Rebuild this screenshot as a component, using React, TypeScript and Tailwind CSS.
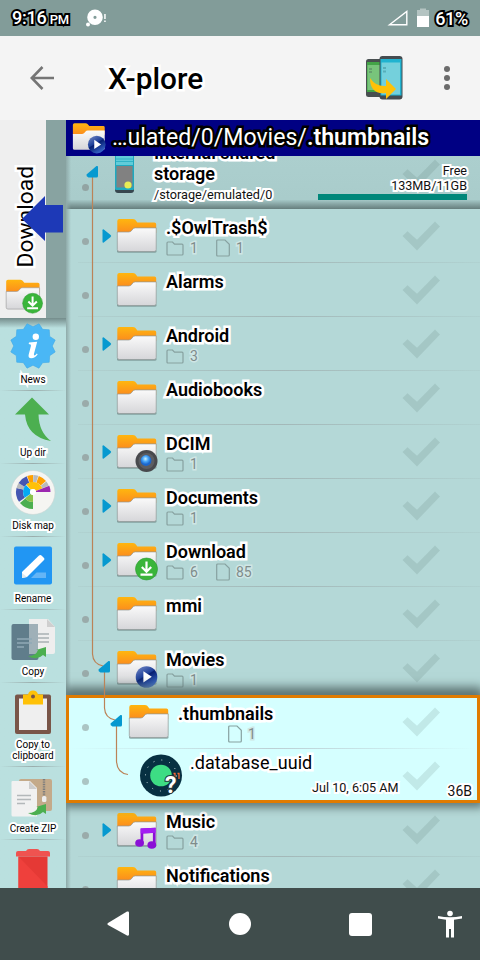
import React from "react";

const whiteHalo = "[-webkit-text-stroke:5px_#fff] [paint-order:stroke_fill] [stroke-linejoin:round]";
const blackHalo = "[-webkit-text-stroke:4px_#000] [paint-order:stroke_fill] [stroke-linejoin:round]";

type Badge = "play" | "camera" | "download" | "music";

function BadgeMark({ kind }: { kind: Badge }) {
  if (kind === "download")
    return (
      <g>
        <circle cx="31.5" cy="29" r="11" fill="#3ab53a" stroke="#2f9a35" strokeWidth=".6" />
        <path d="M31.5 21.5v9.5M26.8 27l4.7 4.7 4.7-4.7M25.5 34.6h12" fill="none" stroke="#fff" strokeWidth="2.2" />
      </g>
    );
  if (kind === "camera")
    return (
      <g>
        <circle cx="31.5" cy="29" r="11" fill="#48494d" />
        <circle cx="31.5" cy="29" r="8" fill="#5c5d62" />
        <circle cx="31" cy="28.5" r="5.4" fill="url(#lens)" />
      </g>
    );
  if (kind === "play")
    return (
      <g>
        <circle cx="31.5" cy="29" r="10.8" fill="url(#ball)" />
        <path d="M28.4 23.2v11.2l8.4-5.6z" fill="#fff" />
      </g>
    );
  return (
    <g fill="#8a0fd6">
      <path d="M25.6 18.5l15-.7v16.7h-2.7V23l-9.6.5V33h-2.7z" />
      <path d="M25.6 18.5l15-.7v5l-15 .7z" fill="#a31df2" />
      <ellipse cx="24.6" cy="33" rx="4.4" ry="3.8" />
      <ellipse cx="36.8" cy="35" rx="4.4" ry="3.8" />
    </g>
  );
}

function Folder({ badge, className = "" }: { badge?: Badge; className?: string }) {
  return (
    <svg viewBox="0 0 44 42" className={`h-[42px] w-[44px] shrink-0 ${className}`}>
      <path d="M2 34.5h39.5v1.6q-.4 .6-1.6 .6H3.6q-1.2 0-1.6-.8z" fill="#6f8988" opacity=".7" />
      <path d="M2.3 17V5q0-2 2-2h13.5q1.6 0 2.4 .8l2.2 2.6h17q1.8 0 1.8 1.8V17z" fill="url(#orange)" />
      <path d="M2.3 16h11.3q2 0 3.2-1.6l1-1.4q.8-1.1 2.6-1.1h20.8V33.5q0 2-2 2H4.3q-2 0-2-2z" fill="url(#paper)" stroke="#8f9897" strokeWidth=".7" />
      {badge && <BadgeMark kind={badge} />}
    </svg>
  );
}

function Check({ className = "" }: { className?: string }) {
  return (
    <svg viewBox="0 0 38 30" className={`h-[30px] w-[38px] shrink-0 ${className}`}>
      <path d="M.5 15l5-4.8 9.5 8.5L33 .5l5 5L15 29.5z" fill="#47605f" opacity=".14" />
    </svg>
  );
}

function Dot() {
  return <span className="ml-4 mt-[29px] h-[7px] w-[7px] shrink-0 rounded-full bg-[#9aabaa]" />;
}

function Count({ folders, files, indent }: { folders?: number; files?: number; indent?: boolean }) {
  const num = "text-[14px] leading-[16px] text-[#7f8c8b] [-webkit-text-stroke:3px_#cfe6e5] [paint-order:stroke_fill]";
  return (
    <div className="flex h-[18px] items-center">
      {folders !== undefined && (
        <>
          <svg viewBox="0 0 18 18" className="h-[18px] w-[18px]">
            <path d="M1 15V4q0-1 1-1h4.5l2 2.2H16q1 0 1 1V15q0 1-1 1H2q-1 0-1-1z" fill="none" stroke="#87a1a0" strokeWidth="1.2" />
          </svg>
          <span className={`ml-[6px] w-[26px] ${num}`}>{folders}</span>
        </>
      )}
      {files !== undefined && (
        <>
          <svg viewBox="0 0 14 18" className={`h-[18px] w-[14px] ${indent ? "ml-[50px]" : ""}`}>
            <path d="M.7 16V2q0-1 1-1H9l4.3 4.3V16q0 1-1 1H1.7q-1 0-1-1z" fill="none" stroke="#87a1a0" strokeWidth="1.2" />
          </svg>
          <span className={`ml-[6px] ${num}`}>{files}</span>
        </>
      )}
    </div>
  );
}

interface Item {
  name: string;
  folders?: number;
  files?: number;
  badge?: Badge;
  arrow?: boolean;
}

function Row({ item, last }: { item: Item; last?: boolean }) {
  return (
    <div className="flex h-[54px] shrink-0 flex-col">
      <div className="flex h-[53px] items-start">
        <Dot />
        <svg viewBox="0 0 10 14" className="ml-[13px] mt-[20px] h-[14px] w-[10px] shrink-0">
          {item.arrow && <path d="M.5 1.3Q.5 0 1.8 .5L8.6 5.9Q9.8 7 8.6 8L1.8 13.6Q.5 14 .5 12.8z" fill="#0699d0" />}
        </svg>
        <Folder badge={item.badge} className="ml-[3px] mt-[7px]" />
        <div className="ml-[7px] flex flex-col pt-[8px]">
          <span className={`whitespace-nowrap text-[18px] font-semibold leading-[21px] text-black ${whiteHalo}`}>{item.name}</span>
          <div className="pt-px">
            <Count folders={item.folders} files={item.files} />
          </div>
        </div>
        <Check className="ml-auto mr-[40px] mt-[12px]" />
      </div>
      {!last && <Divider />}
    </div>
  );
}

function Divider() {
  return <div className="ml-3 h-px bg-linear-to-r from-[#b0d2d1] via-[#a3b8b8] to-[#b0d2d1]" />;
}

const above: Item[] = [
  { name: ".$OwlTrash$", folders: 1, files: 1, arrow: true },
  { name: "Alarms" },
  { name: "Android", folders: 3, arrow: true },
  { name: "Audiobooks" },
  { name: "DCIM", folders: 1, badge: "camera", arrow: true },
  { name: "Documents", folders: 1, arrow: true },
  { name: "Download", folders: 6, files: 85, badge: "download", arrow: true },
  { name: "mmi" },
  { name: "Movies", folders: 1, badge: "play" },
];

function Tool({ label, height, children }: { label?: React.ReactNode; height: string; children: React.ReactNode }) {
  return (
    <div className={`flex w-full shrink-0 flex-col items-center pt-1 ${height}`}>
      <svg viewBox="0 0 48 48" className="h-[48px] w-[48px] shrink-0">{children}</svg>
      <span className="mt-[4px] text-center text-[10px] leading-[11px] text-black [-webkit-text-stroke:4px_#fff] [paint-order:stroke_fill] [stroke-linejoin:round]">
        {label}
      </span>
      <div className="mt-auto h-px w-full bg-linear-to-r from-transparent via-[#9aadac] to-transparent" />
    </div>
  );
}

const burst = Array.from({ length: 24 }, (_, i) => {
  const a = (i * Math.PI) / 12;
  const r = i % 2 ? 19.3 : 23;
  return `${24 + r * Math.sin(a + 0.26)},${24 + r * Math.cos(a + 0.26)}`;
}).join(" ");

// Ring slice around (24, 24); angles in degrees, clockwise from the top.
function slice(from: number, to: number, inner: number, outer: number) {
  const p = (deg: number, r: number) => {
    const a = (deg * Math.PI) / 180;
    return `${(24 + r * Math.sin(a)).toFixed(2)} ${(24 - r * Math.cos(a)).toFixed(2)}`;
  };
  return `M${p(from, inner)}L${p(from, outer)}A${outer} ${outer} 0 0 1 ${p(to, outer)}L${p(to, inner)}A${inner} ${inner} 0 0 0 ${p(from, inner)}z`;
}

const slices: [number, number, number, number, string][] = [
  [180, 230, 10, 17, "#4caf50"],
  [180, 232, 3, 10, "#8bc34a"],
  [235, 284, 10, 17, "#4556b2"],
  [284, 302, 10, 17, "#b9b9bb"],
  [302, 338, 10, 17, "#4556b2"],
  [235, 315, 3, 10, "#03a9f4"],
  [340, 360, 8, 17, "#ffa000"],
  [1, 18, 10, 17, "#b9b9bb"],
  [20, 50, 10, 17, "#ffa000"],
  [52, 68, 10, 17, "#b9b9bb"],
  [318, 428, 3, 10, "#ffc107"],
  [69, 90, 3, 17.5, "#9c27b0"],
];

function Defs() {
  return (
    <svg className="absolute h-0 w-0">
      <defs>
        <linearGradient id="orange" x2="0" y2="1"><stop stopColor="#ffb60f" /><stop offset="1" stopColor="#fb8b1e" /></linearGradient>
        <linearGradient id="paper" x2="0" y2="1"><stop stopColor="#fafafa" /><stop offset="1" stopColor="#d6d6d9" /></linearGradient>
        <radialGradient id="lens" cx=".45" cy=".35"><stop stopColor="#d0f4ff" /><stop offset=".5" stopColor="#4aa8fa" /><stop offset="1" stopColor="#1b66cc" /></radialGradient>
        <linearGradient id="ball" x1=".1" y1="0" x2=".7" y2="1"><stop stopColor="#7389c6" /><stop offset=".45" stopColor="#1d3f99" /><stop offset=".5" stopColor="#061f72" /><stop offset="1" stopColor="#3a6bd0" /></linearGradient>
      </defs>
    </svg>
  );
}

function Sidebar() {
  return (
    <div className="flex w-[66px] shrink-0 flex-col overflow-hidden bg-[#bae0df]">
      <div className="flex h-[198px] shrink-0">
        <div className="flex w-[46px] flex-col items-center bg-[#efefef]">
          <div className="ml-[5px] mt-[45px] flex h-[104px] w-[30px] items-center">
            <span className={`text-[22.8px] leading-[30px] text-black [writing-mode:vertical-rl] rotate-180 ${whiteHalo}`}>Download</span>
          </div>
          <div className="mt-[8px] h-[39px] w-[38px]">
            <svg viewBox="0 0 44 42" className="h-[38px] w-[40px]">
              <path d="M2.3 17V5q0-2 2-2h13.5q1.6 0 2.4 .8l2.2 2.6h15q1.8 0 1.8 1.8V17z" fill="url(#orange)" />
              <path d="M2.3 16h11.3q2 0 3.2-1.6l1-1.4q.8-1.1 2.6-1.1h18.8V33.5q0 2-2 2H4.3q-2 0-2-2z" fill="url(#paper)" stroke="#999" strokeWidth=".7" />
              <BadgeMark kind="download" />
            </svg>
          </div>
        </div>
        <div className="w-5 bg-[#88a3a1]" />
      </div>
      <div className="flex flex-col bg-linear-to-b from-[#748c8b] via-[#bae0df] via-[10px] to-[#bae0df]">
        <Tool label="News" height="h-[73px]">
          <polygon points={burst} fill="#4ab7f5" stroke="#38a5e4" strokeWidth=".5" />
          <circle cx="26.8" cy="14.8" r="3.2" fill="#fff" />
          <path d="M20 20.5l8.2-.7-3.2 12q-.4 2 .8 1.5 1-.6 2-1.9l.9 .8q-2.7 4-6.5 4-3.4-.2-2.5-3.8l2.3-8.6q.4-1.5-2.3-1.8z" fill="#fff" />
        </Tool>
        <Tool label="Up dir" height="h-[73px]">
          <path d="M23 2.500l17 17H29.500q.5 18 12.500 26.500Q18 42 16 19.500H6z" fill="#4caf50" />
        </Tool>
        <Tool label="Disk map" height="h-[73px]">
          <circle cx="24" cy="24.500" r="22" fill="#f5f5f2" stroke="#c9d5d4" strokeWidth=".6" />
          {slices.map(([a, b, r, o, color]) => <path key={`${a}-${r}`} d={slice(a, b, r, o)} fill={color} />)}
          <circle cx="24" cy="24" r="3" fill="#fff" />
        </Tool>
        <Tool label="Rename" height="h-[73px]">
          <rect x="5" y="5.500" width="38" height="38" rx="2" fill="#2196f3" />
          <path d="M22 37l5.500-5.500h9.500V37z" fill="#64b5f6" />
          <path d="M13 37v-6l17-16.500q1.500-1 3 .5l2 2q1 1 0 2L18 36z" fill="#fff" />
          <path d="M13 37v-5l5 4z" fill="#e3e9ec" />
        </Tool>
        <Tool label="Copy" height="h-[73px]">
          <rect x="2.500" y="10" width="27" height="36" rx="2" fill="#607d8b" />
          <path d="M20 5h19l7 8v25q0 2-2 2H20z" fill="#eeeeee" />
          <path d="M38 5v8h8z" fill="#cfcfcf" />
          <path d="M20 10h9v30h-9z" fill="#90a4ae" opacity=".85" />
          <path d="M8 25h15M8 29h15M8 33h7" stroke="#90a9b6" strokeWidth="1.4" />
          <path d="M29 20h11M29 24h11M29 28h11" stroke="#a9b1b4" strokeWidth="1.5" />
          <path d="M19 42q8 0 10-6h-2l10-3v10l-3-2q-6 6-15 1z" fill="#4caf50" />
        </Tool>
        <Tool label={<>Copy to<br />clipboard</>} height="h-[84px]">
          <rect x="6" y="7.500" width="36" height="39.500" rx="2" fill="#795548" />
          <path d="M10 11.500h28v31.500H10z" fill="#efefef" />
          <path d="M14 7.500h5q1-4 5-4t5 4h5v10H14z" fill="#ffc107" />
          <circle cx="24" cy="9.500" r="2" fill="#795548" />
        </Tool>
        <Tool label="Create ZIP" height="h-[73px]">
          <rect x="10" y="8" width="33" height="32" rx="2" fill="#c4aa8a" />
          <path d="M35 8v19" stroke="#7d7d7d" strokeWidth="2.4" strokeDasharray="1.4 1" />
          <rect x="33" y="25" width="4.4" height="6" rx="1.5" fill="#eee" />
          <path d="M2.500 11q0-1 1-1H21l7 7v28.500h-24q-1.500 0-1.500-1.500z" fill="#f1f1f1" />
          <path d="M20 10v8h8z" fill="#cdcdcd" />
          <path d="M8 24.500h14M8 28.500h14M8 32.500h8" stroke="#b3b8ba" strokeWidth="1.400" />
          <path d="M19 42q8 0 10-6h-2l10-3v10l-3-2q-6 6-15 1z" fill="#4caf50" />
        </Tool>
        <Tool height="h-[73px]">
          <path d="M7 9q0-2 2-2h8q1-2 3-2h8q2 0 3 2h8q2 0 2 2v3.500H7z" fill="#ef5350" />
          <path d="M9.500 12.500h29V48h-29z" fill="#e53935" />
          <path d="M9.500 12.500l29 30V48h-29z" fill="#ef403c" />
        </Tool>
      </div>
    </div>
  );
}

function StorageRow() {
  return (
    <div className="flex h-[53px] shrink-0 items-start overflow-hidden bg-linear-to-b from-[#accfce] from-0% via-[#a9cccb] via-[82%] to-[#667e7d] to-100%">
      <span className="ml-4 mt-[28px] h-[7px] w-[7px] shrink-0 rounded-full bg-[#92a4a3]" />
      <svg viewBox="0 0 22 38" className="ml-[25px] h-[38px] w-[22px] shrink-0">
        <path d="M1 0h19v34q0 3-3 3H4q-3 0-3-3z" fill="#37474f" />
        <path d="M1 0h19v33q0 1-1 1H2q-1 0-1-1z" fill="#1fa9bf" />
        <path d="M2 0h17v9H2z" fill="#61ccd9" />
        <path d="M2 3h17M2 5.500h17" stroke="#25acc0" strokeWidth=".8" />
        <path d="M2.500 10h16v21.500h-16z" fill="#818181" />
        <circle cx="14" cy="29" r="3.600" fill="#e7ec55" />
      </svg>
      <div className="ml-[18px] flex w-[140px] flex-col">
        <span className={`-mt-[14px] text-[18px] font-semibold leading-[21px] text-black ${whiteHalo}`}>Internal shared storage</span>
        <span className="mt-[3px] text-[12.700px] leading-[16px] text-[#111] [-webkit-text-stroke:4px_#fff] [paint-order:stroke_fill]">/storage/emulated/0</span>
      </div>
      <div className="relative ml-auto mr-[13px] flex w-[149px] flex-col items-end pt-[7px]">
        <Check className="absolute left-[84px] top-[3px]" />
        <span className="relative text-right text-[12.600px] leading-[15px] text-[#111] [-webkit-text-stroke:4px_#fff] [paint-order:stroke_fill]">
          Free<br />133MB/11GB
        </span>
        <div className="relative mt-px h-[6px] w-[149px] bg-[#00877a]" />
      </div>
    </div>
  );
}

const marker = "M20.500 19.500L30.500 11Q32 10.500 32 12V21q0 1.500-1.500 1.500h-8Q20 21.500 20.500 19.500z";

function TreeLines() {
  return (
    <svg viewBox="0 0 414 732" className="pointer-events-none absolute left-0 top-0 h-[732px] w-[414px]">
      <g fill="none" stroke="#bb8358" strokeWidth="1.200">
        <path d="M26.500 20V498Q27 508 37 510" />
        <path d="M38.500 515V552Q39 562 49 564" />
        <path d="M50.500 570V605Q51 617 62 618.500" />
      </g>
      <g fill="#0699d0">
        <path d={marker} transform="translate(0 -1)" />
        <path d={marker} transform="translate(12 494)" />
        <path d={marker} transform="translate(24 548)" />
      </g>
    </svg>
  );
}

function AndroidFile() {
  return (
    <svg viewBox="0 0 44 44" className="ml-[50px] mt-[4px] h-[44px] w-[44px] shrink-0">
      <circle cx="22" cy="22.500" r="21" fill="#073042" />
      <circle cx="22" cy="22.500" r="15.500" fill="none" stroke="#d5e6e8" strokeWidth="1" strokeDasharray="1 7.100" />
      <circle cx="22" cy="22.500" r="10.800" fill="#3ddc84" />
      <path d="M34.500 20.500h1.500v5.500M38.500 20.500h1.500v5.500" fill="none" stroke="#f86734" strokeWidth="1.300" />
      <text x="26" y="40" fontFamily="Roboto, sans-serif" fontWeight="700" fontSize="23" fill="#fff" stroke="#27363b" strokeWidth="2" paintOrder="stroke">?</text>
    </svg>
  );
}

export default function App() {
  return (
    <div className="flex h-[960px] w-[480px] flex-col overflow-hidden font-[Roboto,sans-serif]">
      <Defs />
      <div className="flex h-[36px] shrink-0 items-center bg-[#829c99] pl-[12px] pr-[12px] text-white">
        <span className={`whitespace-nowrap pt-[2px] text-[18px] font-medium leading-[36px] tracking-[-0.200px] ${blackHalo}`}>
          9:16<span className="ml-[3px] text-[13px]">PM</span>
        </span>
        <svg viewBox="0 0 22 18" className="ml-[16px] h-[18px] w-[22px]" fill="#fff">
          <path fillRule="evenodd" d="M10 .500a7.800 7.800 0 1 1 0 15.600 7.800 7.800 0 0 1 0-15.600zm0 6.200a1.600 1.600 0 1 0 0 3.200 1.600 1.600 0 0 0 0-3.200z" />
          <circle cx="3" cy="15.500" r="2" />
          <path d="M19.200 5h1.500v5h-1.500zM19.200 11.500h1.500V13h-1.500z" />
        </svg>
        <svg viewBox="0 0 21 16" className="ml-auto h-[16px] w-[21px]">
          <path d="M2.500 14.800L19.800 1.500v13.300z" fill="none" stroke="#fff" strokeWidth="1.400" />
        </svg>
        <svg viewBox="0 0 12 20" className="ml-[9px] mt-[-2px] h-[20px] w-[12px]">
          <path d="M0 3h3V1.500h6V3h3v8H0z" fill="#b4c4c2" />
          <path d="M0 9h12v11H0z" fill="#fff" />
        </svg>
        <span className={`ml-[6px] whitespace-nowrap pt-[2px] text-[18px] font-medium leading-[36px] tracking-[-0.300px] ${blackHalo}`}>61%</span>
      </div>

      <div className="flex h-[84px] shrink-0 items-center bg-[#f4f4f4]">
        <svg viewBox="0 0 24 24" className="ml-[30px] h-[24px] w-[24px]">
          <path d="M24 12H2M12.500 1L1.800 12l10.700 11" fill="none" stroke="#757575" strokeWidth="2.600" />
        </svg>
        <span className={`ml-[54px] pt-[2px] text-[29.800px] font-medium leading-[36px] text-black ${whiteHalo}`}>X-plore</span>
        <svg viewBox="0 0 38 46" className="ml-auto h-[46px] w-[38px]">
          <rect x="1" y="4" width="20" height="38" rx="2.500" fill="#484f50" />
          <path d="M2 7h18v30H2z" fill="#43a447" />
          <path d="M2.500 10h18v25h-18z" fill="#78c47b" />
          <path d="M4 14h3M4 17h3" stroke="#4f7860" strokeWidth="1.400" opacity=".6" />
          <rect x="14.500" y="1" width="23" height="43.500" rx="3" fill="#454c50" />
          <path d="M15.500 4h21v36.500h-21z" fill="#20b3d0" />
          <path d="M16.500 7.500h18.500v32H16.500z" fill="#74d0dc" />
          <path d="M18 13h3M18 16.500h3" stroke="#4599a3" strokeWidth="2" opacity=".6" />
          <path d="M5 23q6 9 16 8v-7l10 10-10 10v-6Q5 40 5 23z" fill="#ffc107" />
        </svg>
        <svg viewBox="0 0 6 24" className="ml-[41px] mr-[30px] h-[24px] w-[6px]" fill="#6b6b6b">
          <circle cx="3" cy="3" r="3" /><circle cx="3" cy="12" r="3" /><circle cx="3" cy="21" r="3" />
        </svg>
      </div>

      <div className="relative flex h-[768px] shrink-0">
        <Sidebar />
        <div className="flex w-[414px] shrink-0 flex-col overflow-hidden bg-[#b4d8d7]">
          <div className="flex h-[36px] shrink-0 items-center bg-[#000083]">
            <svg viewBox="0 0 44 42" className="ml-[5px] h-[36px] w-[36px]">
              <path d="M2.300 17V5q0-2 2-2h13.500q1.600 0 2.400 .800l2.200 2.600h17q1.800 0 1.800 1.800V17z" fill="url(#orange)" />
              <path d="M2.300 16h11.300q2 0 3.200-1.600l1-1.400q.8-1.100 2.600-1.100h20.800V33.500q0 2-2 2H4.300q-2 0-2-2z" fill="url(#paper)" />
              <BadgeMark kind="play" />
            </svg>
            <span className="ml-[5px] whitespace-nowrap text-[23.100px] leading-[34px] text-white [-webkit-text-stroke:5px_#000] [paint-order:stroke_fill]">
              …ulated/0/Movies/<b className="font-semibold">.thumbnails</b>
            </span>
          </div>
          <div className="relative flex h-[732px] flex-col overflow-hidden">
            <StorageRow />
            {above.map((item, i) => <Row key={item.name} item={item} last={i === above.length - 1} />)}
            <div className="relative z-10 flex h-[108px] shrink-0 flex-col border-[3px] border-[#e07b00] bg-[#d5ffff] shadow-[0_-5px_10px_3px_#5f7776,0_2px_8px_3px_#6f8887]">
              <div className="flex h-[50px] shrink-0 items-start">
                <span className="ml-[13px] mt-[26px] h-[7px] w-[7px] shrink-0 rounded-full bg-[#abc5c4]" />
                <Folder className="ml-[38px] mt-[4px]" />
                <div className="ml-[7px] flex flex-col pt-[5px]">
                  <span className={`text-[18px] font-semibold leading-[21px] text-black ${whiteHalo}`}>.thumbnails</span>
                  <div className="pt-px">
                    <Count files={1} indent />
                  </div>
                </div>
                <Check className="ml-auto mr-[37px] mt-[9px]" />
              </div>
              <div className="h-px bg-linear-to-r from-transparent via-[#bccfd4] to-transparent" />
              <div className="flex h-[51px] items-start">
                <span className="ml-[13px] mt-[29px] h-[7px] w-[7px] shrink-0 rounded-full bg-[#abc5c4]" />
                <AndroidFile />
                <div className="ml-[7px] flex flex-1 flex-col pt-[3px]">
                  <span className={`text-[18px] leading-[21px] tracking-[0.050px] text-black ${whiteHalo}`}>.database_uuid</span>
                  <div className="flex h-[27px] items-start justify-end pr-[5px] text-[#111] [-webkit-text-stroke:4px_#fff] [paint-order:stroke_fill]">
                    <span className="mt-[7px] text-[12.600px] leading-[16px]">Jul 10, 6:05 AM</span>
                    <span className="ml-[49px] mt-[10px] text-[14px] leading-[16px]">36B</span>
                  </div>
                </div>
                <Check className="absolute right-[37px] top-[63px]" />
              </div>
            </div>
            <Row item={{ name: "Music", folders: 4, badge: "music", arrow: true }} />
            <Row item={{ name: "Notifications" }} last />
            <div className="absolute left-0 top-0 h-full w-[5px] bg-linear-to-r from-[#8faaa9] to-transparent" />
            <div className="absolute left-0 top-0 z-20"><TreeLines /></div>
          </div>
        </div>
        <svg viewBox="0 0 42 46" className="absolute left-[22px] top-[76px] h-[46px] w-[42px]">
          <path d="M0 23L23 0v9h18v27.500H23V45z" fill="#1d39b7" />
        </svg>
      </div>

      <div className="flex h-[72px] shrink-0 items-center bg-[#404d4c] pl-[107px] pr-[18px]">
        <svg viewBox="0 0 22 26" className="h-[26px] w-[22px]"><path d="M1 12L20 .500q2-.500 2 1v22q0 1.500-2 1L1 14q-1.200-1 0-2z" fill="#fff" /></svg>
        <span className="ml-[100px] h-[22px] w-[22px] rounded-full bg-white" />
        <span className="ml-[98px] h-[23px] w-[23px] rounded-[3px] bg-white" />
        <svg viewBox="0 0 24 28" className="ml-auto h-[28px] w-[24px]" fill="#fff">
          <circle cx="12" cy="3.500" r="2.800" />
          <path d="M0 6q12 2.600 24 0v2.500l-8 1.200V27.500h-3V19h-2v8.500H8V9.700L0 8.500z" />
        </svg>
      </div>
    </div>
  );
}
